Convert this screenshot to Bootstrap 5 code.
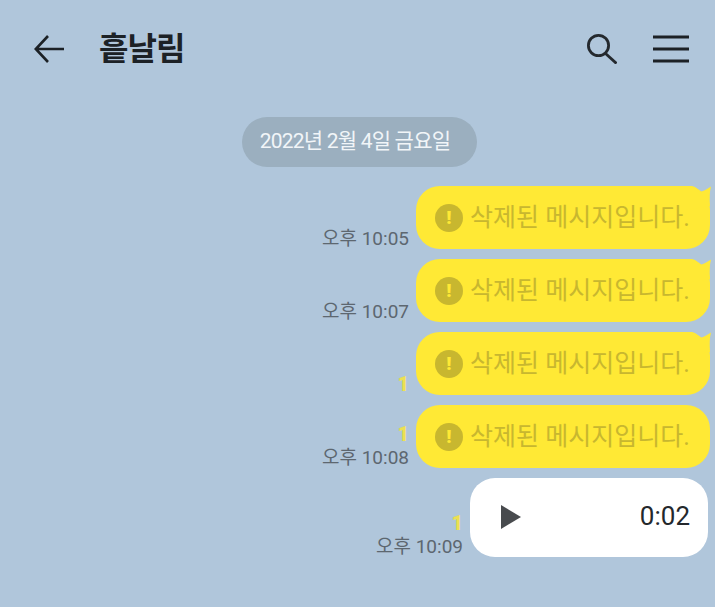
<!DOCTYPE html>
<html lang="ko">
<head>
  <meta charset="UTF-8" />
  <title>흩날림</title>
  <meta name="viewport" content="width=device-width, initial-scale=1" />
  <link rel="stylesheet" href="https://cdn.jsdelivr.net/npm/bootstrap@5.3.2/dist/css/bootstrap.min.css" />
  <style>
    body {
      background: #b0c6db;
      font-family: Roboto, "Noto Sans CJK KR", sans-serif;
      height: 607px;
      overflow: hidden;
    }

    .top-bar {
      height: 97px;
      padding: 0 26px 0 34px;
    }

    .room-title {
      font-size: 32px;
      font-weight: 700;
      color: #1c2126;
      margin-left: 35px;
      letter-spacing: -1px;
      line-height: 1;
    }

    .menu-icon {
      margin-left: 36px;
    }

    .date-row {
      margin-top: 20px;
      margin-bottom: 19px;
    }

    .date-pill {
      background: #9bafbf;
      color: #f1f5f8;
      height: 50px;
      width: 235px;
      margin-left: 4px;
      padding-right: 9px;
      border-radius: 25px;
      font-size: 21px;
      letter-spacing: -0.8px;
    }

    .chat-list {
      padding-right: 5px;
      gap: 10px;
    }

    .msg-meta {
      margin-right: 7px;
      line-height: 1;
      text-align: right;
    }

    .msg-time {
      color: #5d6770;
      font-size: 19px;
      margin-top: 4px;
      margin-bottom: 1px;
    }

    .unread {
      color: #ece052;
      font-size: 20px;
      font-weight: 900;
      margin-bottom: 1px;
    }

    .bubble-deleted {
      position: relative;
      background: #ffe935;
      color: #c8b72f;
      width: 294px;
      height: 63px;
      border-radius: 24px;
      font-size: 25px;
      padding-left: 19px;
      white-space: nowrap;
    }

    .bubble-tail {
      position: absolute;
      top: 0;
      right: -1px;
    }

    .warn-dot {
      width: 28px;
      height: 28px;
      border-radius: 50%;
      background: #c8b72f;
      color: #ffe935;
      font-size: 19px;
      font-weight: 900;
      margin-right: 7px;
      flex-shrink: 0;
      line-height: 1;
    }

    .bubble-voice {
      background: #fff;
      width: 238px;
      height: 79px;
      border-radius: 25px;
      margin-right: 2px;
      padding: 0 18px 2px 31px;
      color: #24282c;
      font-size: 26px;
    }
  </style>
</head>

<body>
  <div class="top-bar d-flex align-items-center">
    <svg width="30" height="28" viewBox="0 0 30 28" fill="none" stroke="#1c2126" stroke-width="2.6">
      <path d="M30 14H2M14 1 1.8 14 14 27" />
    </svg>
    <div class="room-title">흩날림</div>
    <svg class="ms-auto" width="30" height="30" viewBox="0 0 30 30" fill="none" stroke="#24292e" stroke-width="2.8">
      <circle cx="11.5" cy="11.5" r="10.1" />
      <path d="M18.5 19.5 29.5 29.5" />
    </svg>
    <svg class="menu-icon" width="36" height="28" viewBox="0 0 36 28" fill="none" stroke="#1c2126" stroke-width="2.8">
      <path d="M0 2H36M0 14H36M0 26H36" />
    </svg>
  </div>

  <div class="date-row d-flex justify-content-center">
    <div class="date-pill d-flex align-items-center justify-content-center">2022년 2월 4일 금요일</div>
  </div>

  <div id="chatList" class="chat-list d-flex flex-column align-items-end"></div>

  <script>
    const chatList = document.getElementById("chatList");

    const messages = [
      { time: "오후 10:05", unread: "", tail: true },
      { time: "오후 10:07", unread: "", tail: true },
      { time: "", unread: "1", tail: true },
      { time: "오후 10:08", unread: "1", tail: false }
    ];

    const tailSvg = '<svg class="bubble-tail" width="25" height="24" viewBox="0 0 25 24"><path d="M0 0H6Q11 1 14 6Q18 5 25 .5Q23 8 24 20L0 24Z" fill="#ffe935"/></svg>';

    function metaHtml(m) {
      return `<div class="msg-meta">
        ${m.unread ? `<div class="unread">${m.unread}</div>` : ""}
        ${m.time ? `<div class="msg-time">${m.time}</div>` : ""}
      </div>`;
    }

    messages.forEach(m => {
      const row = document.createElement("div");
      row.className = "d-flex align-items-end";
      row.innerHTML = `${metaHtml(m)}
      <div class="bubble-deleted d-flex align-items-center">
        <span class="warn-dot d-flex align-items-center justify-content-center">!</span>
        <span>삭제된 메시지입니다.</span>
        ${m.tail ? tailSvg : ""}
      </div>`;
      chatList.appendChild(row);
    });

    const voice = document.createElement("div");
    voice.className = "d-flex align-items-end";
    voice.innerHTML = `${metaHtml({ time: "오후 10:09", unread: "1" })}
      <div class="bubble-voice d-flex align-items-center justify-content-between">
        <svg width="20" height="24" viewBox="0 0 20 24"><path d="M0 0 20 12 0 24Z" fill="#484b4e"/></svg>
        <span>0:02</span>
      </div>`;
    chatList.appendChild(voice);
  </script>
  <script src="https://cdn.jsdelivr.net/npm/bootstrap@5.3.2/dist/js/bootstrap.bundle.min.js"></script>
</body>
</html>
